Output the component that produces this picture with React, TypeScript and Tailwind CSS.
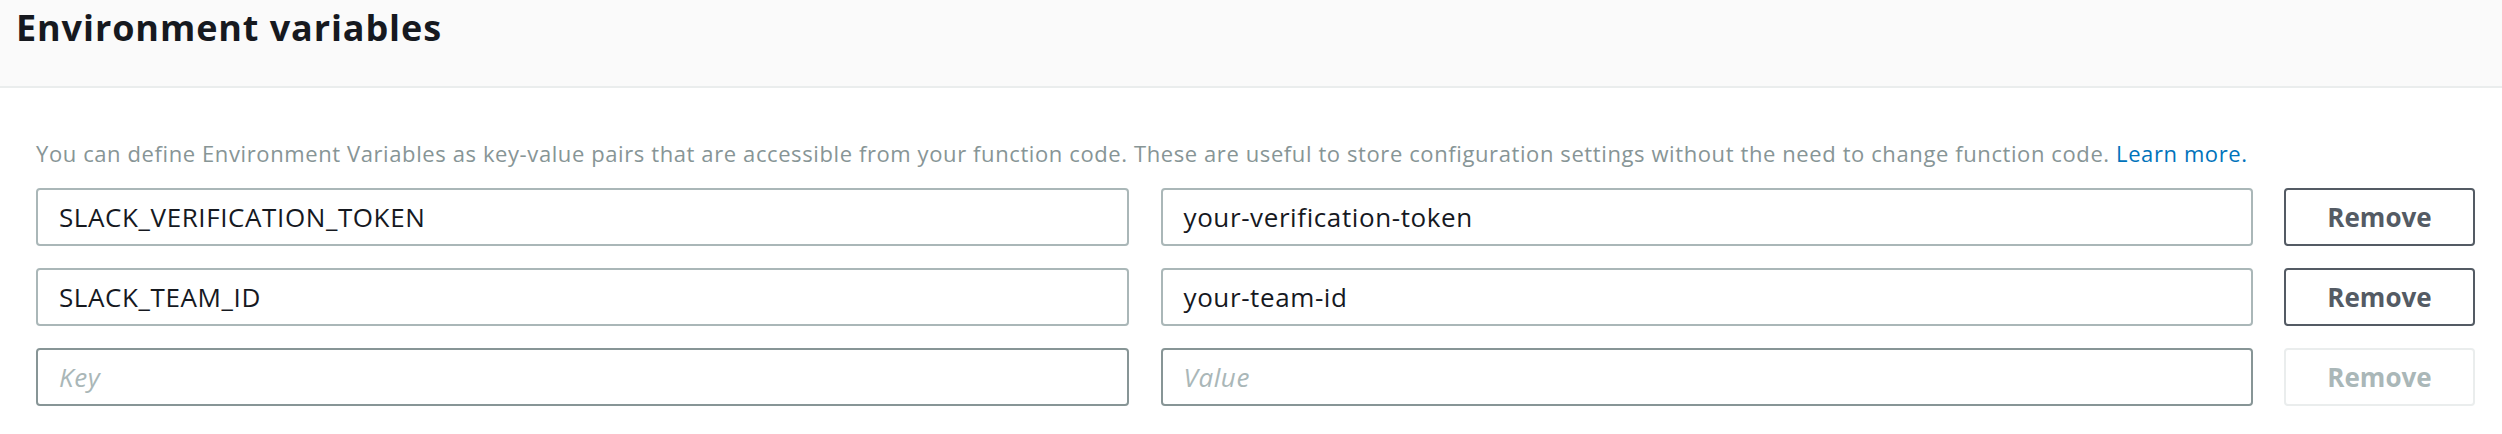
import React from "react";

const rows = [
  { key: "SLACK_VERIFICATION_TOKEN", value: "your-verification-token", empty: false },
  { key: "SLACK_TEAM_ID", value: "your-team-id", empty: false },
  { key: "", value: "", empty: true },
];

export default function App() {
  return (
    <div className="w-[2502px] h-[434px] bg-white" style={{ fontFamily: "'Open Sans', 'Liberation Sans', sans-serif" }}>
      <div className="h-[88px] bg-[#fafafa] border-b-2 border-[#eaeded] px-[16px] pt-[5px]">
        <h2 className="text-[36px] leading-[46px] font-bold text-[#16191f] tracking-[0.9px]">Environment variables</h2>
      </div>
      <div className="pl-[36px] pr-[27px] pt-[49px]">
        <p className="text-[22px] leading-[32px] text-[#879596] tracking-[0.6px]">
          You can define Environment Variables as key-value pairs that are accessible from your function code. These are useful to store configuration settings without the need to change function code.{" "}
          <a className="text-[#0073bb]">Learn more.</a>
        </p>
        <div className="mt-[19px] flex flex-col gap-[22px]">
          {rows.map((r, i) => (
            <div key={i} className="flex gap-[32px]">
              <div
                className={`flex-1 h-[58px] rounded-[4px] border-2 ${r.empty ? "border-[#879596]" : "border-[#aab7b8]"} flex items-center pl-[21px] text-[26px] tracking-[0.6px] text-[#16191f]`}
              >
                {r.empty ? <span className="italic text-[#aab7b8]">Key</span> : r.key}
              </div>
              <div
                className={`flex-1 h-[58px] rounded-[4px] border-2 ${r.empty ? "border-[#879596]" : "border-[#aab7b8]"} flex items-center pl-[21px] text-[26px] tracking-[0.6px] text-[#16191f]`}
              >
                {r.empty ? <span className="italic text-[#aab7b8]">Value</span> : r.value}
              </div>
              <button
                className={`w-[191px] h-[58px] rounded-[4px] border-2 ml-[-1px] ${r.empty ? "border-[#eaeded] text-[#aab7b8]" : "border-[#545b64] text-[#545b64]"} text-[26px] font-bold flex items-center justify-center`}
              >
                Remove
              </button>
            </div>
          ))}
        </div>
      </div>
    </div>
  );
}
